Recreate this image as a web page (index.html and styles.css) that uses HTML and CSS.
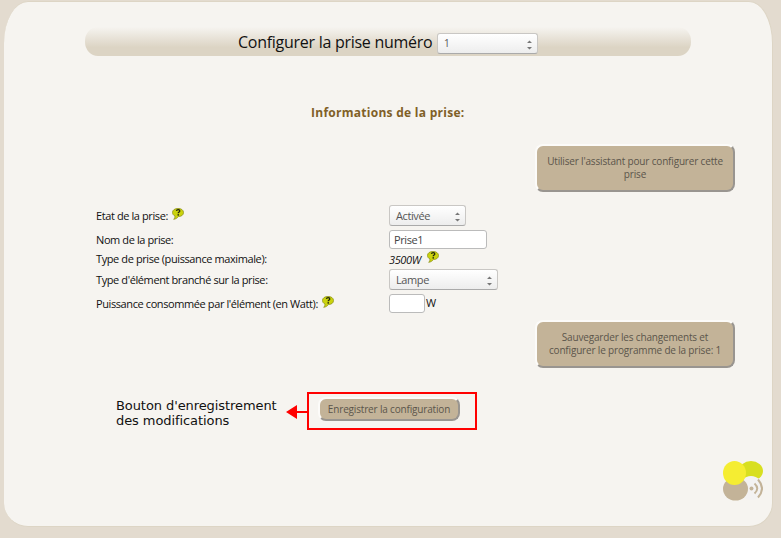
FILE: index.html
```html
<!DOCTYPE html>
<html lang="fr">
<head>
<meta charset="utf-8">
<title>Configurer la prise</title>
<link rel="stylesheet" href="styles.css">
</head>
<body>
<svg class="defs" aria-hidden="true">
  <symbol id="help" viewBox="0 0 12 12">
    <path d="M6 .5C9.200.5 11.500 2 11.500 4.500S9.400 8.500 6.500 8.500C5.500 9.800 4 11 1.700 11.300C2.700 10.300 3 9.300 3 8C1.300 7.300.5 6 .5 4.500C.5 2 2.800.5 6 .5Z" fill="#cbd30c" stroke="#8e931e" stroke-width=".8"/>
    <path d="M4.400 2.800C4.700 1.200 7.800 1.100 7.800 2.900C7.800 4 6.200 4 6.200 5.300" fill="none" stroke="#20240d" stroke-width="1.300"/>
    <circle cx="6.200" cy="6.900" r=".8" fill="#20240d"/>
  </symbol>
  <symbol id="arrows" viewBox="0 0 5 10"><path d="M0 3 2.500 .5 5 3ZM0 7H5L2.500 9.500Z" fill="#777"/></symbol>
</svg>
<main class="panel">
  <header class="titlebar">
    <h1>Configurer la prise numéro</h1>
    <div class="select socket"><span>1</span><svg><use href="#arrows"/></svg></div>
  </header>
  <h2>Informations de la prise:</h2>
  <button class="btn large">Utiliser l'assistant pour configurer cette<br>prise</button>
  <section class="form">
    <div class="row state"><label><span>Etat de la prise:</span><svg class="help"><use href="#help"/></svg></label><div class="select active"><span>Activée</span><svg><use href="#arrows"/></svg></div></div>
    <div class="row name"><label><span>Nom de la prise:</span></label><input value="Prise1"></div>
    <div class="row type"><label><span>Type de prise (puissance maximale):</span></label><em>3500W</em><svg class="help"><use href="#help"/></svg></div>
    <div class="row element"><label><span>Type d'élément branché sur la prise:</span></label><div class="select lamp"><span>Lampe</span><svg><use href="#arrows"/></svg></div></div>
    <div class="row power"><label><span>Puissance consommée par l'élément (en Watt):</span><svg class="help"><use href="#help"/></svg></label><input class="watts"><span class="unit">W</span></div>
  </section>
  <button class="btn large save">Sauvegarder les changements et<br>configurer le programme de la prise: 1</button>
  <section class="record">
    <p>Bouton d'enregistrement<br>des modifications</p>
    <svg class="pointer" viewBox="0 0 23 14"><path d="M0 7 11 0V6H23V8H11V14Z" fill="red"/></svg>
    <div class="frame"><button class="btn small">Enregistrer la configuration</button></div>
  </section>
  <svg class="logo" viewBox="0 0 40 40">
    <ellipse cx="28" cy="10" rx="12" ry="10" fill="#d8df20"/>
    <circle cx="28" cy="27" r="12" fill="#f3f2f2"/>
    <ellipse cx="12.500" cy="28" rx="12.500" ry="11.500" fill="#c3b398"/>
    <ellipse cx="11.500" cy="12" rx="11.500" ry="12" fill="#f5ed32"/>
    <circle cx="28.500" cy="27.500" r="2" fill="#c3b398"/>
    <path d="M31.500 22.500Q37 27.500 31.500 32.500M35 18.500Q43 27.500 35 36.500" fill="none" stroke="#c3b398" stroke-width="2"/>
  </svg>
</main>
</body>
</html>
```
FILE: styles.css
```css
* { box-sizing: border-box; }
body { margin: 0; height: 538px; padding: 1px 8px 11px 4px; overflow: hidden; background: #e3dbcf; font: 11px/15px "Open Sans", "Noto Sans", sans-serif; letter-spacing: -.4px; color: #111; }
.defs { display: none; }
.panel { display: flex; flex-direction: column; width: 769px; height: 526px; padding: 25px 38px 0 81px; background: #f6f4f0; border: solid #ddd5c5; border-width: 1px 1px 1px 0; border-radius: 24px 24px 24px 24px / 42px 42px 24px 24px; position: relative; }
.titlebar { display: flex; align-items: center; flex: none; width: 606px; height: 29px; padding-left: 153px; background: linear-gradient(#f6f4f0, #dcd4c4 70%); border-radius: 13px / 14px; }
h1 { flex: none; width: 198px; margin: 2px 0 0; font-size: 16px; font-weight: 400; letter-spacing: -.27px; color: #111; white-space: nowrap; }
h2 { height: 20px; margin: 47px 0 0 226px; font-size: 12px; line-height: 20px; color: #806027; letter-spacing: .27px; white-space: nowrap; }
.select { display: flex; align-items: center; justify-content: space-between; height: 20px; padding: 0 5px 0 6px; border: 1px solid #c9c7c4; border-radius: 3px; border-bottom-color: #aaa; background: linear-gradient(#fff, #ededed); color: #555; }
.select svg { width: 5px; height: 10px; margin-top: 3px; }
.socket { width: 101px; height: 21px; margin: 4px 0 0 1px; }
.socket span { font-size: 10px; }
.btn { display: block; flex: none; padding: 0; border: 2px solid; border-color: #fcfbf9 #999590 #999590 #fcfbf9; background: #c3b398; color: #5b554b; font: 10px/13px "Open Sans", sans-serif; letter-spacing: -.17px; text-align: center; white-space: nowrap; }
.large { width: 200px; height: 48px; margin: 21px 0 0 450px; border-radius: 8px; }
.form { margin: 12px 0 0 11px; }
.row { display: flex; align-items: center; }
.row label { display: flex; width: 293px; white-space: nowrap; }
.help { width: 12px; height: 12px; margin: 0 0 0 4px; }
.state { height: 22px; }
.active { width: 77px; height: 21px; }
.name { height: 23px; margin-top: 2px; }
.row input { width: 98px; height: 19px; margin: 0; padding: 0 4px; border: 1px solid #bbb; border-radius: 3px; background: #fff; font: 11px "Open Sans", sans-serif; letter-spacing: -.4px; color: #444; }
.type { height: 16px; margin-bottom: 1px; }
.type label { margin-top: -1px; }
.type .help { margin: -4px 0 0 6px; }
.element { height: 22px; }
.lamp { width: 109px; height: 21px; }
.power { height: 24px; margin-top: 1px; }
.row .watts { width: 36px; }
.unit { margin: -2px 0 0 1px; }
.save { margin-top: 5px; }
.record { display: flex; height: 38px; margin: 24px 0 0 31px; }
.record p { flex: none; width: 170px; margin: 6px 0 0; font: 13px/15px "DejaVu Sans", sans-serif; letter-spacing: -.08px; color: #111; white-space: nowrap; }
.pointer { flex: none; width: 23px; height: 14px; margin-top: 13px; }
.frame { flex: none; width: 170px; height: 38px; margin-left: -2px; padding: 3px 0 0 9px; border: 2px solid red; }
.small { width: 142px; height: 24px; border-radius: 8px; }
.logo { position: absolute; right: 9px; bottom: 25px; width: 40px; height: 40px; }
```
